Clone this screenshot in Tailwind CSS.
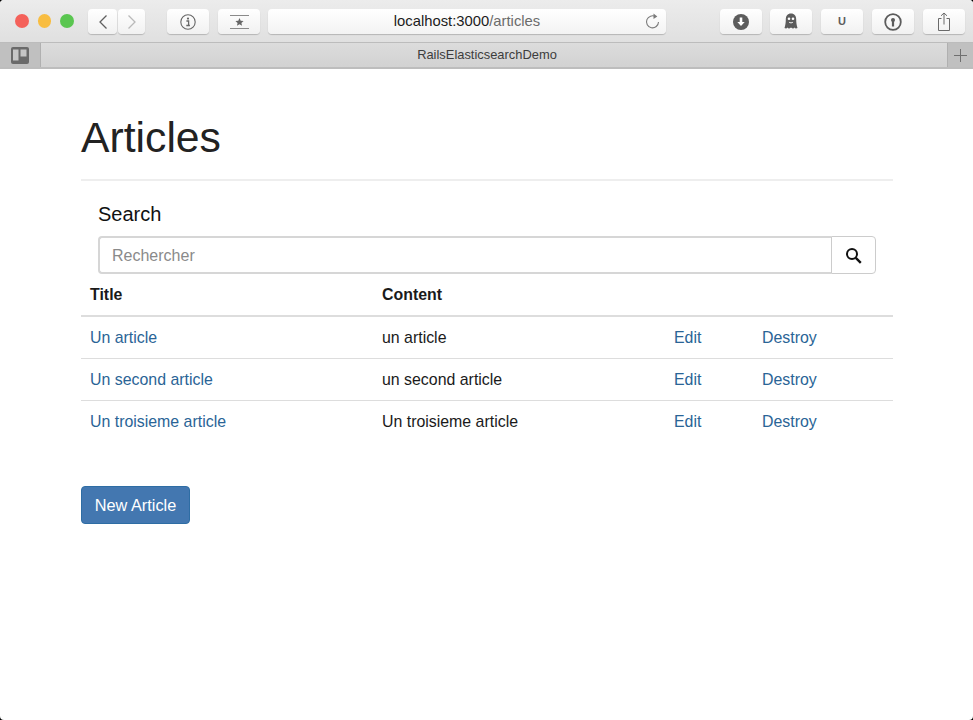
<!DOCTYPE html>
<html lang="en">
<head>
  <meta charset="UTF-8" />
  <title>RailsElasticsearchDemo</title>
  <script src="https://cdn.jsdelivr.net/npm/@tailwindcss/browser@4"></script>
</head>
<body class="h-[720px] w-[973px] overflow-hidden bg-black font-['Liberation_Sans',Arial,sans-serif] text-[#1a1a1a]">
  <div class="h-[720px] overflow-hidden rounded-[4px] bg-white">
  <!-- Toolbar -->
  <div class="flex h-[43px] items-start border-b border-[#bcbcbc] bg-gradient-to-b from-[#ececec] to-[#e0e0e0] pt-[9px]">
    <div class="ml-[15px] flex w-[59px] gap-[9px] pt-[5px]">
      <span class="size-[13.5px] rounded-full bg-[#f4615a]"></span>
      <span class="size-[13.5px] rounded-full bg-[#f8bd41]"></span>
      <span class="size-[13.5px] rounded-full bg-[#5ac650]"></span>
    </div>
    <div class="ml-[14px] flex gap-px">
      <button class="flex h-[25px] w-[29px] items-center justify-center rounded-[4px] bg-gradient-to-b from-white to-[#f1f1f1] shadow-[0_1px_1px_rgba(0,0,0,0.2)]">
        <svg width="10" height="16" viewBox="0 0 10 16" fill="none" stroke="#5f5f5f" stroke-width="1.3"><path d="M8.5 1.5 2 8l6.5 6.500"/></svg>
      </button>
      <button class="flex h-[25px] w-[27px] items-center justify-center rounded-[4px] bg-gradient-to-b from-white to-[#f1f1f1] shadow-[0_1px_1px_rgba(0,0,0,0.2)]">
        <svg width="10" height="16" viewBox="0 0 10 16" fill="none" stroke="#b9b9b9" stroke-width="1.3"><path d="M1.5 1.5 8 8l-6.500 6.500"/></svg>
      </button>
    </div>
    <button class="ml-[22px] flex h-[25px] w-[42px] items-center justify-center rounded-[4px] bg-gradient-to-b from-white to-[#f1f1f1] shadow-[0_1px_1px_rgba(0,0,0,0.2)]">
      <svg width="16" height="16" viewBox="0 0 16 16" fill="none"><circle cx="8" cy="8" r="7.200" stroke="#666" stroke-width="1.100"/><circle cx="8" cy="4.600" r="1.100" fill="#666"/><path d="M6.400 7h2.200v4.200M6.300 11.500h3.600" stroke="#666" stroke-width="1.300"/></svg>
    </button>
    <button class="ml-[9px] flex h-[25px] w-[42px] items-center justify-center rounded-[4px] bg-gradient-to-b from-white to-[#f1f1f1] shadow-[0_1px_1px_rgba(0,0,0,0.2)]">
      <svg width="19" height="14" viewBox="0 0 19 14" fill="none"><path d="M0 .5h19M0 13.500h19" stroke="#8a8a8a"/><path d="m9.500 3 1.200 2.700 2.900.3-2.200 1.900.7 2.900-2.600-1.500-2.600 1.500.7-2.900L5.400 6l2.900-.3z" fill="#666"/></svg>
    </button>
    <div class="relative ml-[8px] flex h-[25px] w-[398px] items-center justify-center rounded-[4px] bg-gradient-to-b from-white to-[#f3f3f3] text-[14.8px] shadow-[0_1px_1px_rgba(0,0,0,0.2)]">
      <span class="text-[#1c1c1c]">localhost:3000<span class="text-[#6b6b6b]">/articles</span></span>
      <svg class="absolute right-[6px] top-[4px]" width="15" height="16" viewBox="0 0 15 16" fill="none"><path d="M10.600 3.700A6 6 0 1 0 13.500 9" stroke="#7a7a7a" stroke-width="1.100"/><path d="m8.500 .5 3.800 3-3.800 2.500z" fill="#7a7a7a"/></svg>
    </div>
    <button class="ml-[54px] flex h-[25px] w-[42px] items-center justify-center rounded-[4px] bg-gradient-to-b from-white to-[#f1f1f1] shadow-[0_1px_1px_rgba(0,0,0,0.2)]">
      <svg width="16" height="16" viewBox="0 0 16 16"><circle cx="8" cy="8" r="8" fill="#5c5c5c"/><path d="M6.700 3.500h2.600v4.500h2.400L8 12 4.300 8h2.400z" fill="#fff"/></svg>
    </button>
    <button class="ml-[8px] flex h-[25px] w-[42px] items-center justify-center rounded-[4px] bg-gradient-to-b from-white to-[#f1f1f1] shadow-[0_1px_1px_rgba(0,0,0,0.2)]">
      <svg width="14" height="17" viewBox="0 0 14 17"><path d="M7 .5C3.500.5 1.800 3 1.800 6.500c0 3-.5 6-1.300 8.500 1.300.8 2.300.6 3-.5.8 1.400 2 1.400 3.500 0 1.500 1.400 2.700 1.400 3.500 0 .7 1.100 1.700 1.300 3 .5-.8-2.500-1.300-5.500-1.300-8.500C12.200 3 10.500.5 7 .5z" fill="#5c5c5c"/><circle cx="5" cy="5.800" r="1.300" fill="#fff"/><circle cx="9" cy="5.800" r="1.300" fill="#fff"/><path d="M5.200 9.300c1.200.7 2.400.7 3.600 0" stroke="#fff" fill="none"/></svg>
    </button>
    <button class="ml-[9px] flex h-[25px] w-[42px] items-center justify-center rounded-[4px] bg-gradient-to-b from-white to-[#f1f1f1] text-[11px] font-bold text-[#5c5c5c] shadow-[0_1px_1px_rgba(0,0,0,0.2)]">U</button>
    <button class="ml-[9px] flex h-[25px] w-[42px] items-center justify-center rounded-[4px] bg-gradient-to-b from-white to-[#f1f1f1] shadow-[0_1px_1px_rgba(0,0,0,0.2)]">
      <svg width="18" height="18" viewBox="0 0 18 18" fill="none"><circle cx="9" cy="9" r="7.800" stroke="#5c5c5c" stroke-width="1.800"/><circle cx="9" cy="7" r="2" fill="#5c5c5c"/><path d="M9 7v6.500" stroke="#5c5c5c" stroke-width="2.200"/></svg>
    </button>
    <button class="ml-[9px] flex h-[25px] w-[42px] items-center justify-center rounded-[4px] bg-gradient-to-b from-white to-[#f1f1f1] shadow-[0_1px_1px_rgba(0,0,0,0.2)]">
      <svg width="14" height="19" viewBox="0 0 14 19" fill="none" stroke="#6a6a6a"><path d="M4.500 6.500H1.500v12h11v-12H9.500M7 12.500V1M4 3.800 7 1l3 2.800"/></svg>
    </button>
  </div>

  <!-- Tab bar -->
  <div class="flex h-[26px] border-b-2 border-[#bdbdbd] bg-gradient-to-b from-[#dcdcdc] to-[#d2d2d2]">
    <div class="flex w-[41px] items-center justify-center border-r border-[#b0b0b0] bg-[#c0c0c0]">
      <svg width="18" height="17" viewBox="0 0 18 17"><rect width="18" height="17" rx="2" fill="#6a6a6a"/><rect x="2" y="2.500" width="5.500" height="11" fill="#c6c6c6"/><rect x="9.500" y="2.500" width="6" height="7" fill="#c6c6c6"/></svg>
    </div>
    <div class="flex flex-1 items-center justify-center pr-[14px] text-[12.9px] text-[#3d3d3d]">RailsElasticsearchDemo</div>
    <div class="flex w-[26px] items-center justify-center border-l border-[#b0b0b0] bg-[#c0c0c0]">
      <svg width="13" height="13" viewBox="0 0 13 13" stroke="#6f6f6f"><path d="M6.500 0v13M0 6.500h13"/></svg>
    </div>
  </div>

  <!-- Page -->
  <main class="pr-[80px] pl-[81px]">
    <h1 class="h-[112px] border-b-2 border-[#eeeeee] pt-[44px] text-[42.7px] leading-[48px] text-[#222222]">Articles</h1>

    <div class="px-[17px]">
      <h2 class="pt-[20px] text-[20px] leading-[26px] text-[#111111]">Search</h2>
      <div class="mt-[9px] flex h-[38px]">
        <input placeholder="Rechercher" class="h-full flex-1 rounded-l-[4px] border-2 border-r-0 border-[#d6d6d6] px-[12px] pt-[2px] text-[16px] placeholder:text-[#8a8a8a]" />
        <button class="flex h-full w-[45px] items-center justify-center rounded-r-[4px] border border-[#cccccc]">
          <svg width="17" height="17" viewBox="0 0 17 17" fill="none" stroke="#111"><circle cx="7" cy="7" r="5" stroke-width="2"/><path d="m10.800 10.800 5 5" stroke-width="2.400"/></svg>
        </button>
      </div>
    </div>

    <table class="w-[812px] table-fixed text-[15.9px]">
      <colgroup>
        <col class="w-[292px]" /><col class="w-[292px]" /><col class="w-[88px]" /><col />
      </colgroup>
      <thead>
        <tr class="h-[42px] border-b-2 border-[#dddddd] text-left">
          <th class="pl-[9px]">Title</th><th class="pl-[9px]">Content</th><th></th><th></th>
        </tr>
      </thead>
      <tbody>
        <tr class="h-[42px] border-b border-[#dddddd]">
          <td class="pt-[2px] pl-[9px] text-[#2a6496]">Un article</td><td class="pt-[2px] pl-[9px]">un article</td><td class="pt-[2px] pl-[9px] text-[#2a6496]">Edit</td><td class="pt-[2px] pl-[9px] text-[#2a6496]">Destroy</td>
        </tr>
        <tr class="h-[42px] border-b border-[#dddddd]">
          <td class="pt-[2px] pl-[9px] text-[#2a6496]">Un second article</td><td class="pt-[2px] pl-[9px]">un second article</td><td class="pt-[2px] pl-[9px] text-[#2a6496]">Edit</td><td class="pt-[2px] pl-[9px] text-[#2a6496]">Destroy</td>
        </tr>
        <tr class="h-[42px]">
          <td class="pt-[2px] pl-[9px] text-[#2a6496]">Un troisieme article</td><td class="pt-[2px] pl-[9px]">Un troisieme article</td><td class="pt-[2px] pl-[9px] text-[#2a6496]">Edit</td><td class="pt-[2px] pl-[9px] text-[#2a6496]">Destroy</td>
        </tr>
      </tbody>
    </table>

    <button class="mt-[44px] h-[38px] w-[109px] rounded-[4px] border border-[#2e6da4] bg-[#4377b0] text-[16.3px] text-white">New Article</button>
  </main>
  </div>
</body>
</html>
